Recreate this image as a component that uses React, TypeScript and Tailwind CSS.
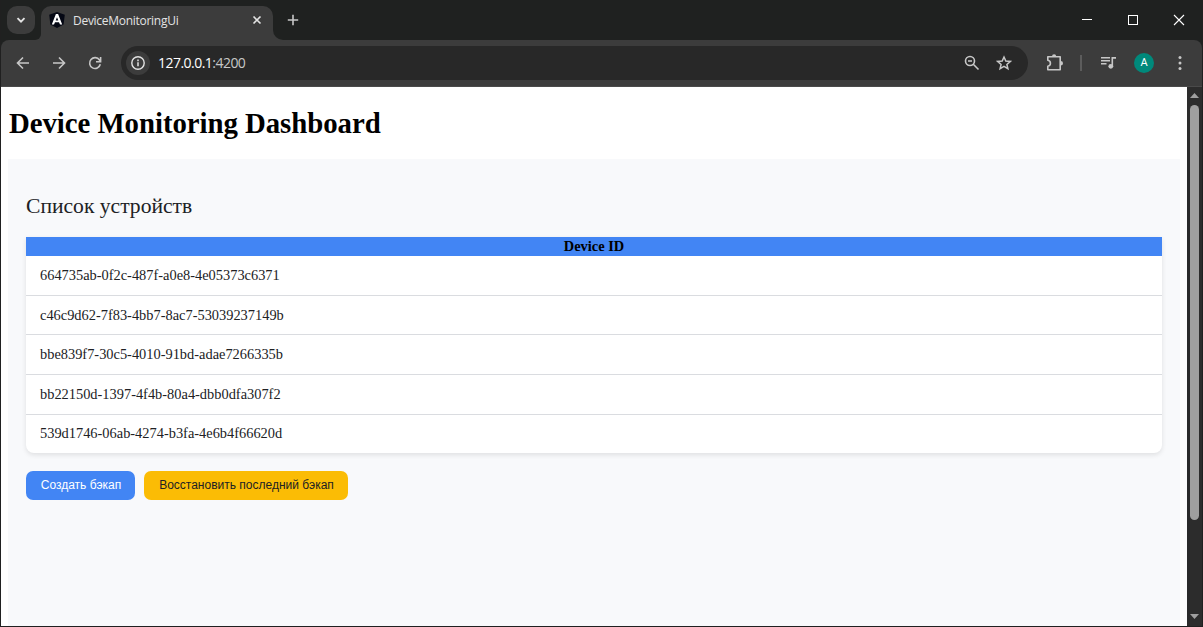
import React from "react";

const devices = [
  { id: "664735ab-0f2c-487f-a0e8-4e05373c6371", row: "h-10 border-b pb-0.5" },
  { id: "c46c9d62-7f83-4bb7-8ac7-53039237149b", row: "h-[39px] border-b" },
  { id: "bbe839f7-30c5-4010-91bd-adae7266335b", row: "h-10 border-b pb-0.5" },
  { id: "bb22150d-1397-4f4b-80a4-dbb0dfa307f2", row: "h-10 border-b pb-0.5" },
  { id: "539d1746-06ab-4274-b3fa-4e6b4f66620d", row: "h-[38px] pb-0.5" },
];

function Icon({ size = 16, className = "", children }: { size?: number; className?: string; children: React.ReactNode }) {
  return (
    <svg
      width={size}
      height={size}
      viewBox={`0 0 ${size} ${size}`}
      fill="none"
      stroke="currentColor"
      strokeWidth="1.6"
      className={`shrink-0 ${className}`}
    >
      {children}
    </svg>
  );
}

function TabStrip() {
  return (
    <div className="flex h-10 shrink-0 items-start bg-[#1f2120]">
      <button className="mt-1.5 ml-1.5 flex h-7 w-7 items-center justify-center rounded-[10px] bg-[#3c3c3c] text-[#e3e3e3]">
        <Icon>
          <path d="M4.5 6.2 8 9.700l3.500-3.500" strokeWidth="1.900" />
        </Icon>
      </button>
      <div className="flex h-[34px] self-end">
        <div className="flex w-[6px] items-end bg-[#3c3c3c]">
          <div className="h-full w-full rounded-br-[10px] bg-[#1f2120]" />
        </div>
        <div className="flex h-[34px] w-[232px] items-start rounded-t-[10px] bg-[#3c3c3c] pt-1.5">
          <svg width="16" height="16" viewBox="0 0 16 16" className="ml-2 shrink-0">
            <path d="M8 0 15.800 2.700 14.600 12.500 8 16 1.400 12.500.2 2.700Z" fill="#050814" />
            <path d="M6.900 2H9.100L13.200 12.500H11L10 10.200H6L5 12.500H2.800ZM8 5.200 6.700 8.500H9.300Z" fill="#fff" fillRule="evenodd" />
          </svg>
          <span className="ml-2 w-[150px] font-['Open_Sans',sans-serif] text-[12px] leading-[17px] tracking-[-0.28px] text-[#e3e3e3]">
            DeviceMonitoringUi
          </span>
          <Icon className="ml-[26px] text-[#e3e3e3]">
            <path d="m4.500 4.500 7 7m0-7-7 7" />
          </Icon>
        </div>
        <div className="w-[10px] bg-[#3c3c3c]">
          <div className="h-full w-full rounded-bl-[10px] bg-[#1f2120]" />
        </div>
      </div>
      <Icon className="mt-3 ml-0.5 text-[#c7c7c7]">
        <path d="M8 2.800v10.400M2.800 8h10.400" />
      </Icon>
      <div className="mt-3 mr-[15px] ml-auto flex gap-[30px] text-white">
        <Icon>
          <path d="M3 7.500h10" strokeWidth="1" />
        </Icon>
        <Icon>
          <rect x="3.500" y="3.500" width="9" height="9" strokeWidth="1" />
        </Icon>
        <Icon>
          <path d="m3 3 10 10m0-10L3 13" strokeWidth="1.100" />
        </Icon>
      </div>
    </div>
  );
}

function Toolbar() {
  return (
    <div className="bg-[#1f2120]">
      <div className="flex h-[47px] items-center rounded-t-[8px] border-b border-[#4a4a4a] bg-[#3c3c3c] text-[#c7c7c7]">
        <Icon className="ml-3.5">
          <path d="M14 8H3M8 2.500 2.500 8 8 13.500" />
        </Icon>
        <Icon className="ml-5">
          <path d="M2 8h11M8 2.500 13.500 8 8 13.500" />
        </Icon>
        <Icon className="ml-5">
          <path d="M13.300 9.300A5.400 5.400 0 1 1 12.500 5l1 1.400M13.600 2v4.700H9" />
        </Icon>
        <div className="ml-[18px] flex h-[34px] w-[907px] items-center rounded-full bg-[#282828]">
          <div className="ml-[5px] flex h-6 w-6 items-center justify-center rounded-full bg-[#3c3c3c] text-[#e3e3e3]">
            <Icon>
              <circle cx="8" cy="8" r="6.200" strokeWidth="1.400" />
              <path d="M8 7.300v4M8 4.600v1.600" strokeWidth="1.500" />
            </Icon>
          </div>
          <span className="ml-2 font-['Open_Sans',sans-serif] text-[14px] leading-5 tracking-[-0.53px] text-[#c7c7c7]">
            <span className="text-white">127.0.0.1</span>:4200
          </span>
          <Icon className="mr-4 ml-auto">
            <circle cx="6" cy="6" r="4.500" />
            <path d="m9.300 9.300 5.200 5.200M4 6h4" />
          </Icon>
          <Icon className="mr-4">
            <path d="m8 2 1.800 4 4.500.4-3.400 3 1 4.300L8 11.400l-3.900 2.300 1-4.300-3.400-3L6.200 6Z" strokeWidth="1.500" />
          </Icon>
        </div>
        <Icon size={18} className="ml-[18px]">
          <path d="M1.800 2.800h12.400v12.900H1.800v-3.500c3.500-.5 3.500-5.400 0-5.900Z" strokeLinejoin="round" />
          <path d="M6 2.500a2.100 2.300 0 0 1 4.200 0ZM14.700 7a2.300 2.200 0 0 1 0 4.400Z" fill="currentColor" stroke="none" />
        </Icon>
        <div className="ml-4 h-4 w-0.5 bg-[#5c5c5c]" />
        <Icon className="ml-[18px]">
          <path d="M1 2.800h9M1 5.800h9M1 8.800h5.500" />
          <path d="M12.300 11.500V2.900H16" />
          <circle cx="10.800" cy="11.300" r="2.400" fill="currentColor" stroke="none" />
        </Icon>
        <div className="ml-[18px] flex h-5 w-5 items-center justify-center rounded-full bg-[#00897b] pt-px font-[Roboto,sans-serif] text-[11px] text-white">
          A
        </div>
        <Icon className="ml-[18px]">
          <g fill="currentColor" stroke="none">
            <circle cx="8" cy="2.600" r="1.500" />
            <circle cx="8" cy="8" r="1.500" />
            <circle cx="8" cy="13.400" r="1.500" />
          </g>
        </Icon>
      </div>
    </div>
  );
}

function Scrollbar() {
  return (
    <div className="flex w-[15px] flex-col items-center bg-[#2c2c2c] text-[#9f9f9f]">
      <svg width="9" height="5" viewBox="0 0 9 5" className="mt-1.5 shrink-0">
        <path d="M0 5 4.500 0 9 5Z" fill="currentColor" />
      </svg>
      <div className="mt-[7px] h-[415px] w-[9px] shrink-0 rounded-full bg-[#9f9f9f]" />
      <svg width="9" height="5" viewBox="0 0 9 5" className="mt-auto mb-[7px] shrink-0">
        <path d="M0 0h9L4.500 5Z" fill="currentColor" />
      </svg>
    </div>
  );
}

function Dashboard() {
  return (
    <main className="flex flex-1 flex-col bg-white pr-[7px] pl-[7px] font-['Liberation_Serif',serif]">
      <h1 className="h-[72px] pt-5 pl-px text-[28.800px] leading-[33px] font-bold tracking-[-0.04px] text-black">
        Device Monitoring Dashboard
      </h1>
      <section className="flex-1 bg-[#f8f9fb] px-[18px] pt-[34px] text-[#202124]">
        <h2 className="h-11 text-[21.600px] leading-[27px]">Список устройств</h2>
        <div className="overflow-hidden rounded-b-[8px] bg-white shadow-[0_2px_5px_rgba(0,0,0,0.1)]">
          <div className="h-[19px] bg-[#4285f4] text-center text-[14.400px] leading-[19px] font-bold text-black">Device ID</div>
          {devices.map((d) => (
            <div key={d.id} className={`flex items-center border-[#dadce0] px-3.5 text-[14.400px] leading-4 ${d.row}`}>
              {d.id}
            </div>
          ))}
        </div>
        <div className="mt-[18px] flex gap-[9px] font-['Liberation_Sans',sans-serif] text-[12px]">
          <button className="h-[29px] w-[109px] rounded-[7px] bg-[#4285f4] pb-0.5 pl-px text-white">Создать бэкап</button>
          <button className="h-[29px] w-[204px] rounded-[7px] bg-[#fbbc05] pb-0.5 pl-px text-[#202124]">Восстановить последний бэкап</button>
        </div>
      </section>
    </main>
  );
}

export default function App() {
  return (
    <div className="flex h-[627px] w-[1203px] flex-col overflow-hidden border-r border-b border-l border-[#202020] bg-white">
      <TabStrip />
      <Toolbar />
      <div className="flex min-h-0 flex-1">
        <Dashboard />
        <Scrollbar />
      </div>
    </div>
  );
}
